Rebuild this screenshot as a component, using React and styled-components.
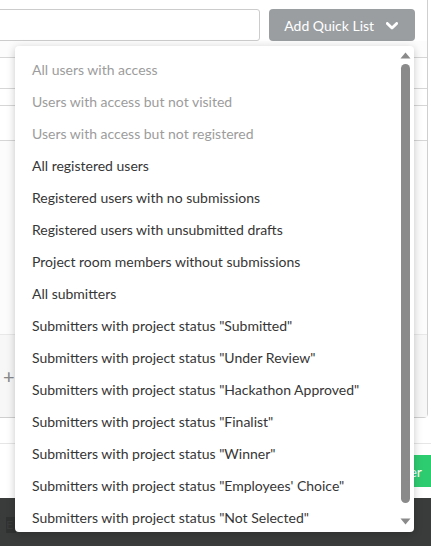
import styled, { createGlobalStyle } from "styled-components";

const GlobalStyle = createGlobalStyle`
  html, body {
    margin: 0;
    padding: 0;
    background: #ffffff;
    font-family: "Lato", "Liberation Sans", sans-serif;
  }
`;

const quickLists = [
  { label: "All users with access", disabled: true },
  { label: "Users with access but not visited", disabled: true },
  { label: "Users with access but not registered", disabled: true },
  { label: "All registered users" },
  { label: "Registered users with no submissions" },
  { label: "Registered users with unsubmitted drafts" },
  { label: "Project room members without submissions" },
  { label: "All submitters" },
  { label: 'Submitters with project status "Submitted"' },
  { label: 'Submitters with project status "Under Review"' },
  { label: 'Submitters with project status "Hackathon Approved"' },
  { label: 'Submitters with project status "Finalist"' },
  { label: 'Submitters with project status "Winner"' },
  { label: 'Submitters with project status "Employees\' Choice"' },
  { label: 'Submitters with project status "Not Selected"' },
];

const App = () => {
  return (
    <>
      <GlobalStyle />
      <PageStyle>
        <PanelStyle>
          <ToolbarStyle>
            <SearchInput type="text" />
            <QuickListButton>
              Add Quick List
              <svg width="12" height="8" viewBox="0 0 12 8">
                <path
                  d="M1.3 1.4 L6 6 L10.7 1.4"
                  fill="none"
                  stroke="#fff"
                  strokeWidth="2.8"
                  strokeLinecap="round"
                  strokeLinejoin="round"
                />
              </svg>
            </QuickListButton>
          </ToolbarStyle>
          <TableStyle>
            <TableRow height={30} />
            <TableRow height={16} />
            <TableRow height={34}>
              <HandleDots>⋮</HandleDots>
            </TableRow>
          </TableStyle>
          <AddRowStyle>+</AddRowStyle>
        </PanelStyle>
        <ActionBarStyle>
          <PrimaryButton>Register</PrimaryButton>
        </ActionBarStyle>
        <FooterStyle>
          <FooterChip>E</FooterChip>
        </FooterStyle>

        <DropdownStyle>
          <DropdownList>
            {quickLists.map((item) => (
              <DropdownItem key={item.label} disabled={item.disabled}>
                {item.label}
              </DropdownItem>
            ))}
          </DropdownList>
          <ScrollbarStyle>
            <svg width="11" height="7" viewBox="0 0 11 7">
              <path d="M5.5 0.5 L10.5 6.5 L0.5 6.5 Z" fill="#8a8a8a" />
            </svg>
            <ScrollThumb />
            <svg width="11" height="7" viewBox="0 0 11 7">
              <path d="M0.5 0.5 L10.5 0.5 L5.5 6.5 Z" fill="#8a8a8a" />
            </svg>
          </ScrollbarStyle>
        </DropdownStyle>
      </PageStyle>
    </>
  );
};

const PageStyle = styled.div`
  position: relative;
  width: 431px;
  height: 546px;
  overflow: hidden;
  background: #ffffff;
  display: flex;
  flex-direction: column;
`;

const PanelStyle = styled.div`
  box-sizing: border-box;
  width: 440px;
  height: 422px;
  margin-left: -12px;
  margin-top: -4px;
  border: 1px solid #cfcfcf;
  border-radius: 4px;
  background: #fcfcfc;
  display: flex;
  flex-direction: column;
  flex-shrink: 0;
`;

const ToolbarStyle = styled.div`
  display: flex;
  align-items: center;
  gap: 9px;
  padding: 12px 12px 0 0;
  height: 32px;
  background: #ffffff;
`;

const SearchInput = styled.input`
  box-sizing: border-box;
  width: 272px;
  height: 32px;
  border: 1px solid #cccccc;
  border-radius: 3px;
  background: #ffffff;
  outline: none;
`;

const QuickListButton = styled.button`
  box-sizing: border-box;
  width: 146px;
  height: 32px;
  border: none;
  border-radius: 4px;
  background: #9a9ea1;
  color: #ffffff;
  font-family: "Lato", "Liberation Sans", sans-serif;
  font-size: 14px;
  display: flex;
  align-items: center;
  justify-content: center;
  gap: 12px;
  padding: 0 2px 0 0;

  svg {
    margin-top: 1px;
  }
`;

const TableStyle = styled.div`
  margin-top: 16px;
  border-top: 1px solid #d6d6d6;
  background: #ffffff;
`;

const TableRow = styled.div`
  position: relative;
  height: ${(p) => p.height}px;
  border-bottom: 1px solid #d6d6d6;
`;

const HandleDots = styled.span`
  position: absolute;
  left: 24px;
  top: 11px;
  font-size: 12px;
  color: #999999;
  line-height: 1;
`;

const AddRowStyle = styled.div`
  margin-top: auto;
  height: 82px;
  border-top: 1px solid #e8e8e8;
  background: #f7f7f7;
  color: #888888;
  font-size: 20px;
  display: flex;
  align-items: center;
  padding-left: 14px;
`;

const ActionBarStyle = styled.div`
  margin-top: 25px;
  border-top: 1px solid #e6e6e6;
  height: 55px;
  display: flex;
  align-items: flex-start;
  padding-top: 11px;
  box-sizing: border-box;
  flex-shrink: 0;
`;

const PrimaryButton = styled.button`
  margin-left: 356px;
  height: 32px;
  border: none;
  border-radius: 3px;
  background: #2ecc71;
  color: #ffffff;
  font-family: "Lato", "Liberation Sans", sans-serif;
  font-size: 14px;
  flex-shrink: 0;
  padding: 0 16px;
`;

const FooterStyle = styled.div`
  flex: 1;
  background: #3a3c3b;
  padding: 19px 0 0 6px;
`;

const FooterChip = styled.div`
  width: 10px;
  height: 16px;
  background: #303231;
  color: #3a3c3b;
  font-size: 12px;
`;

const DropdownStyle = styled.div`
  position: absolute;
  top: 46px;
  left: 15px;
  width: 399px;
  height: 486px;
  background: #ffffff;
  border-radius: 4px;
  box-shadow: 0 2px 8px rgba(0, 0, 0, 0.22);
  display: flex;
  overflow: hidden;
`;

const DropdownList = styled.ul`
  list-style: none;
  margin: 0;
  padding: 8px 0 0 0;
  flex: 1;
  overflow: hidden;
`;

const DropdownItem = styled.li`
  height: 32px;
  line-height: 32px;
  padding-left: 17px;
  font-size: 14px;
  color: ${(p) => (p.disabled ? "#9c9c9c" : "#363636")};
  white-space: nowrap;
`;

const ScrollbarStyle = styled.div`
  width: 15px;
  display: flex;
  flex-direction: column;
  align-items: center;
  padding: 6px 0 7px 0;
  box-sizing: border-box;
  gap: 5px;
  margin-right: 1px;
`;

const ScrollThumb = styled.div`
  width: 9px;
  flex: 1;
  margin-bottom: 10px;
  border-radius: 5px;
  background: #8a8a8a;
`;

export default App;
